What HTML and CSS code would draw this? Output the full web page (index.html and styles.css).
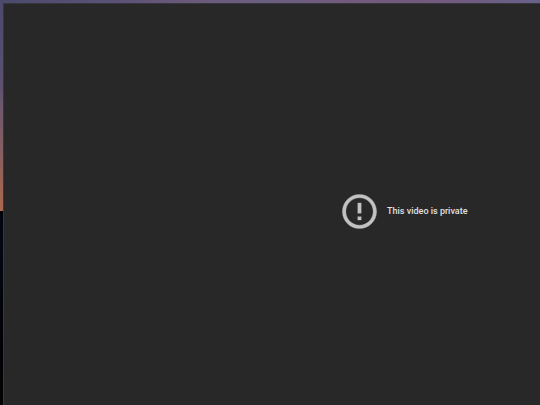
FILE: index.html
```html
<!DOCTYPE html>
<html lang="en">
<head>
<meta charset="utf-8">
<title>Video</title>
<link rel="stylesheet" href="styles.css">
</head>
<body>
<main class="backdrop">
  <section class="player">
    <div class="notice">
      <svg class="notice-icon" viewBox="0 0 24 24" aria-hidden="true"><path d="M11 15h2v2h-2zm0-8h2v6h-2zm.99-5C6.47 2 2 6.48 2 12s4.47 10 9.99 10C17.52 22 22 17.52 22 12S17.52 2 11.99 2zM12 20c-4.42 0-8-3.58-8-8s3.58-8 8-8 8 3.58 8 8-3.58 8-8 8z"/></svg>
      <p class="notice-text">This video is private</p>
    </div>
  </section>
</main>
</body>
</html>
```
FILE: styles.css
```css
* {
  box-sizing: border-box;
}

body {
  margin: 0;
  font-family: Roboto, "Liberation Sans", sans-serif;
}

/* Dusk sky: a purple band on top, a sunset fading to night down the side */
.backdrop {
  display: flex;
  min-height: 100vh;
  padding: 3px 0 0 3px;
  background:
    linear-gradient(90deg, #4b4a6c 0%, #585276 20%, #6b597a 35%, #6a5f80 50%, #73597c 66%, #72597d 82%, #67628a 100%) top / 100% 3px no-repeat,
    linear-gradient(180deg, #4b4a6c 0%, #5a5070 20%, #70586c 27%, #875f62 38%, #a06552 47%, #aa6950 52%, #02040d 52%, #040813 60%, #010206 85%, #030305 100%);
}

.player {
  display: flex;
  flex: 1;
  align-items: center;
  padding: 14px 0 0 62.4%;
  border: solid #38353e;
  border-width: 1px 0 0 1px;
  background: #282828;
}

.notice {
  display: flex;
  align-items: center;
  gap: 7px;
}

.notice-icon {
  width: 41px;
  height: 41px;
  fill: #c2c2c2;
  stroke: #c2c2c2;
  stroke-width: 0.2;
}

.notice-text {
  margin: 0;
  padding-bottom: 2px;
  color: #e0e0e0;
  font-size: 9px;
  font-weight: 500;
  line-height: 12px;
  white-space: nowrap;
}
```
